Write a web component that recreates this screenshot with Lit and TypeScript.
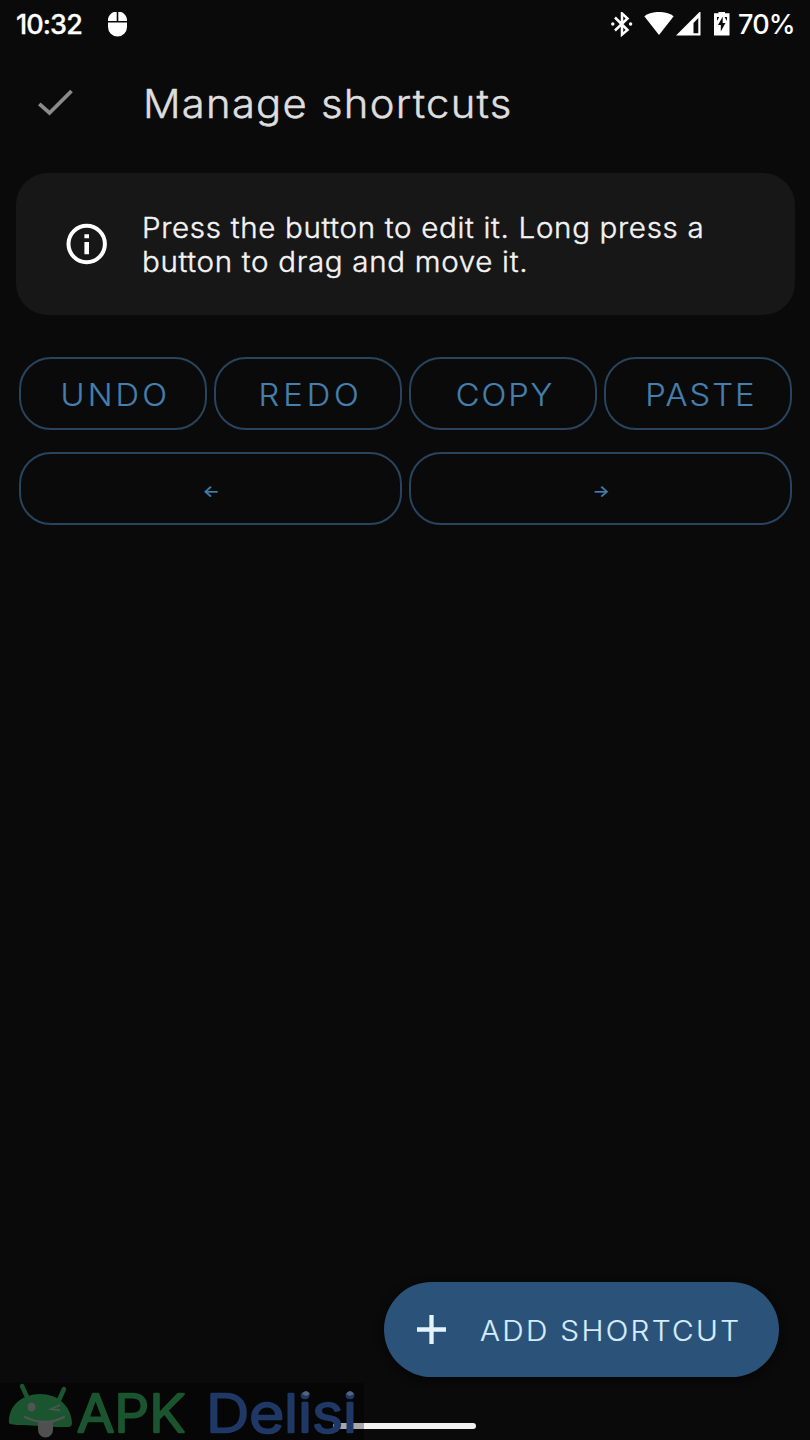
import { LitElement, html, css } from "lit";
import { customElement, property } from "lit/decorators.js";
import { styleMap } from "lit/directives/style-map.js";

@customElement("shortcut-button")
class ShortcutButton extends LitElement {
  @property() label = "";
  @property({ type: Boolean }) arrow = false;
  @property({ type: Number }) tracking = 0;

  static styles = css`
    :host { display: block; min-width: 0; }
    .key {
      box-sizing: border-box;
      width: 100%;
      height: 73px;
      padding: 3px 0 0 5px;
      border: 2px solid #29445e;
      border-radius: 32px;
      background: none;
      color: #457fad;
      font: 300 30.5px/1 Inter, sans-serif;
      -webkit-text-stroke: 0.2px #457fad;
      display: flex;
      align-items: center;
      justify-content: center;
    }
    .text { display: block; transform: scaleX(1.07); }
    .arrow { font-size: 17px; font-weight: 500; padding: 6px 0 0 1px; }
  `;

  render() {
    return html`<button class="key ${this.arrow ? "arrow" : ""}"><span class="text" style=${styleMap({ letterSpacing: `${this.tracking}px` })}>${this.label}</span></button>`;
  }
}

@customElement("app-root")
class AppRoot extends LitElement {
  static styles = css`
    :host {
      display: flex;
      flex-direction: column;
      box-sizing: border-box;
      position: relative;
      width: 810px;
      height: 1440px;
      overflow: hidden;
      background: #0a0a0a;
      color: #fff;
      font-family: Inter, "Liberation Sans", sans-serif;
    }
    svg { display: block; flex: none; }
    .status { display: flex; align-items: center; height: 50px; padding: 0 16px; box-sizing: border-box; flex: none; }
    .clock { font-size: 27px; font-weight: 500; letter-spacing: -0.9px; width: 92px; line-height: 54px; -webkit-text-stroke: 0.3px #fff; }
    .spacer { flex: 1; }
    .percent { margin-left: 7px; font-size: 27px; font-weight: 500; letter-spacing: -0.8px; width: 56px; line-height: 54px; white-space: nowrap; }
    .appbar { display: flex; align-items: center; height: 108px; padding-left: 37px; flex: none; }
    .check { margin-bottom: 2px; }
    .title { margin: 0 0 0 69px; font-size: 39px; font-weight: 300; letter-spacing: 1.2px; color: #dedede; line-height: 48px; white-space: nowrap; transform: scaleX(1.07); transform-origin: 0 0; -webkit-text-stroke: 0.5px #dedede; }
    .card {
      display: flex;
      align-items: center;
      box-sizing: border-box;
      height: 142px;
      margin: 15px 15px 0 16px;
      padding: 2px 0 0 50px;
      border-radius: 32px;
      background: #171717;
      flex: none;
    }
    .info { margin-bottom: 2px; }
    .hint { margin: 0 0 0 34px; font-size: 28px; line-height: 34px; font-weight: 300; letter-spacing: 0.64px; color: #f3f3f3; white-space: nowrap; transform: scaleX(1.055); transform-origin: 0 0; -webkit-text-stroke: 0.4px #f3f3f3; }
    .keys {
      display: grid;
      grid-template-columns: repeat(4, 1fr);
      column-gap: 7px;
      row-gap: 22px;
      padding: 42px 18px 0 19px;
    }
    .wide { grid-column: span 2; }
    .bottom { margin-top: auto; display: flex; justify-content: flex-end; padding: 0 31px 63px 0; }
    .fab {
      display: flex;
      align-items: center;
      box-sizing: border-box;
      width: 395px;
      height: 95px;
      padding: 0 0 0 33px;
      border: 0;
      border-radius: 48px;
      background: #2b5278;
      color: #d6ecff;
      font: 300 28px/1 Inter, sans-serif;
      letter-spacing: 2.2px;
      white-space: nowrap;
      box-shadow: 0 2px 8px #050505;
    }
    .fab-label { margin: 2px 0 0 34px; transform: scaleX(1.06); transform-origin: 0 0; -webkit-text-stroke: 0.2px #d6ecff; }
    .home { position: absolute; left: 333px; top: 1423px; width: 143px; height: 6px; border-radius: 3px; background: #f2f2f2; }
    .mark { position: absolute; left: 0; top: 1383px; overflow: visible; }
    .mark-text { font-family: Inter, sans-serif; font-weight: 300; font-size: 52px; stroke-width: 2.6; stroke-linejoin: round; }
  `;

  render() {
    return html`
      <div class="status">
        <span class="clock">10:32</span>
        <svg width="20" height="26" viewBox="0 0 20 26" fill="#fff">
          <path d="M9.2 .4V10H.5V9.2C.5 4.600 4.200 .8 9.200 .4ZM10.800 .4V10h8.700v-.8C19.500 4.600 15.800 .8 10.800 .4ZM.5 11.500h19v4.500a9.500 9.500 0 0 1-19 0Z" transform="translate(-.5 -1)"/>
        </svg>
        <span class="spacer"></span>
        <svg width="22" height="26" viewBox="0 0 22 26" fill="none" stroke="#fff" stroke-width="2.500">
          <path d="M4 5.500 16.500 18 11 22.600V1.400L16.500 6.500 4 18.500"/>
          <circle cx="1.800" cy="12" r="1.700" fill="#fff" stroke="none"/><circle cx="19.600" cy="12" r="1.700" fill="#fff" stroke="none"/>
        </svg>
        <svg width="98" height="26" viewBox="0 0 98 26" fill="#fff">
          <path d="M11.300 4.200C19-1.500 33-1.500 40.700 4.200L26 23Z"/>
          <path fill-rule="evenodd" d="M67.500-1V23.500H43ZM65.300 6 60.500 11V21.300h4.800Z"/>
          <path fill-rule="evenodd" d="M85.500-1h6.500V1.200h4.500V23.500H81V1.200h4.500ZM89.500 5 85 13h2.800v6.500L92.500 11H89.700V5ZM84 5v4l2.200-4ZM91.500 5h2.500v4Z"/>
        </svg>
        <span class="percent">70%</span>
      </div>
      <header class="appbar">
        <svg class="check" width="37" height="30" viewBox="0 0 37 30" fill="none" stroke="#8b8b8b" stroke-width="3.800"><path d="M2.300 15.800 12.500 25 34.500 3"/></svg>
        <h1 class="title">Manage shortcuts</h1>
      </header>
      <section class="card">
        <svg class="info" width="42" height="42" viewBox="0 0 42 42" fill="none" stroke="#fff">
          <circle cx="20.700" cy="21" r="18.200" stroke-width="4"/>
          <path d="M20.700 11.200v4M20.700 19v12.300" stroke-width="4.600"/>
        </svg>
        <p class="hint">Press the button to edit it. Long press a<br>button to drag and move it.</p>
      </section>
      <main class="keys">
        <shortcut-button label="UNDO" tracking="3"></shortcut-button>
        <shortcut-button label="REDO" tracking="3.7"></shortcut-button>
        <shortcut-button label="COPY" tracking="1.8"></shortcut-button>
        <shortcut-button label="PASTE" tracking="1.9"></shortcut-button>
        <shortcut-button class="wide" arrow label="←"></shortcut-button>
        <shortcut-button class="wide" arrow label="→"></shortcut-button>
      </main>
      <div class="bottom">
        <button class="fab">
          <svg width="29" height="29" viewBox="0 0 29 29" stroke="#e6f3ff" stroke-width="4.300"><path d="M14.500 0v29M0 14.500h29"/></svg>
          <span class="fab-label">ADD SHORTCUT</span>
        </button>
      </div>
      <div class="home"></div>
      <svg class="mark" width="364" height="57" viewBox="0 0 364 57">
        <path d="M0 0h364v57H0Z" fill="#000" opacity=".3"/>
        <g fill="#1a5530" stroke="#1a5530">
          <path d="M9 40C8 22 23 11 40 11S71 22 72 40Q72 44 68 44H57L23 42Q10 42 9 40Z" stroke="none"/>
          <path d="M22 3 28 16M64 6 59 17" stroke-width="4.500" stroke-linecap="round"/>
        </g>
        <ellipse cx="31.500" cy="24" rx="4" ry="4.500" fill="#4f5552"/>
        <path d="M60 22 51 26l9 1.500" fill="none" stroke="#4f5552" stroke-width="1.800"/>
        <path d="M38 38h15v9a7.500 7.500 0 0 1-15 0Z" fill="#505050"/>
        <path d="M25 34Q45 44 64 34" fill="none" stroke="#4f5552" stroke-width="2.500" stroke-linecap="round"/>
        <g class="mark-text">
          <text x="77" y="49" textLength="108" lengthAdjust="spacingAndGlyphs" fill="#1a5530" stroke="#1a5530">APK</text>
          <text x="206" y="49" textLength="151" lengthAdjust="spacingAndGlyphs" fill="#1f3866" stroke="#1f3866">Delisi</text>
        </g>
        <path d="M302 11q4-6 8 0l-4 2ZM346 11q4-6 8 0l-4 2Z" fill="#55657f"/>
      </svg>
    `;
  }
}
